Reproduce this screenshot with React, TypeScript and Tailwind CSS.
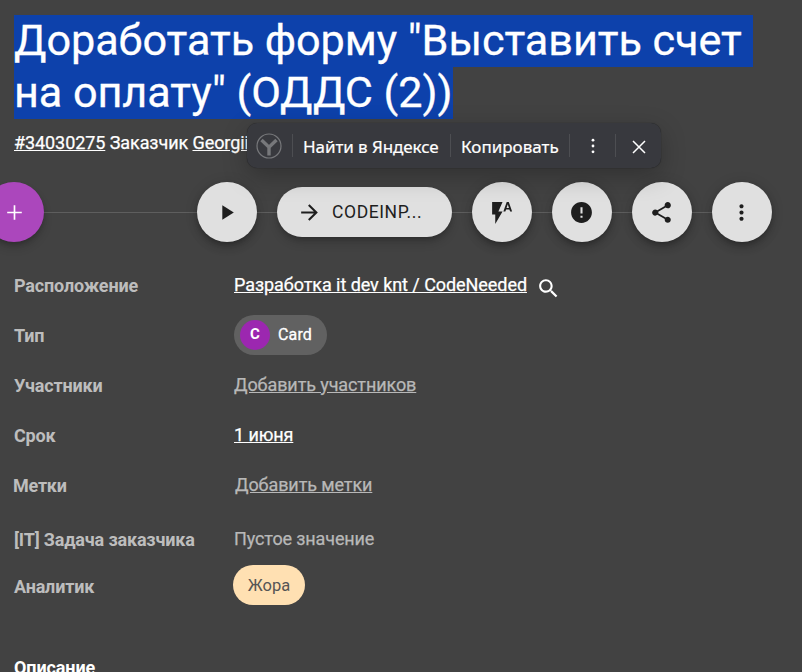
import type { ReactNode } from "react";

const roundButton =
  "relative flex h-[60px] w-[60px] shrink-0 items-center justify-center rounded-full bg-[#e0e0e0] pr-px text-[#1e1e1e] shadow-[0_3px_5px_-1px_rgba(0,0,0,0.2),0_6px_10px_rgba(0,0,0,0.14),0_1px_14px_rgba(0,0,0,0.12)]";

function Icon({ d, size = 24, className = "" }: { d: string; size?: number; className?: string }) {
  return (
    <svg viewBox="0 0 24 24" width={size} height={size} fill="currentColor" className={className}>
      <path d={d} />
    </svg>
  );
}

function RoundButton({ children }: { children: ReactNode }) {
  return <button className={roundButton}>{children}</button>;
}

function Row({ label, height = "h-[50px]", children }: { label: ReactNode; height?: string; children: ReactNode }) {
  return (
    <div className={"flex items-center " + height}>
      <div className="-mt-[2px] w-[220px] shrink-0 font-bold tracking-[-0.17px] text-[#bdbdbd]">{label}</div>
      {children}
    </div>
  );
}

function SelectionToolbar() {
  return (
    <div className="absolute left-[247px] top-[123px] flex h-[45px] w-[414px] items-center rounded-[10px] bg-[#38393e] font-['Noto_Sans',sans-serif] text-[17px] text-white shadow-[0_0_1px_rgba(0,0,0,0.6),0_8px_24px_rgba(0,0,0,0.25)]">
      <div className="flex h-[23px] w-[46px] items-center justify-center border-r border-[#4d4e52]">
        <svg width="26" height="26" viewBox="0 0 26 26" fill="none" stroke="#77787b" className="mr-px mt-px">
          <circle cx="13" cy="13" r="12" strokeWidth="1.2" />
          <path d="M5.5 7L13 14.2L20.5 7M13 13.5V22.5" strokeWidth="3.4" />
        </svg>
      </div>
      <div className="flex h-[23px] w-[158px] items-center border-r border-[#4d4e52] pl-[10px]">
        <span className="whitespace-nowrap pt-[2px] tracking-[-0.08px] [-webkit-text-stroke:0.2px]">Найти в Яндексе</span>
      </div>
      <div className="flex h-[23px] w-[119px] items-center border-r border-[#4d4e52] pl-[10px]">
        <span className="whitespace-nowrap pt-[2px] [-webkit-text-stroke:0.2px]">Копировать</span>
      </div>
      <div className="flex h-[23px] w-[46px] items-center justify-center border-r border-[#4d4e52] pt-px">
        <svg width="4" height="16" viewBox="0 0 4 16" fill="#fff">
          <circle cx="2" cy="2.2" r="1.4" />
          <circle cx="2" cy="8" r="1.4" />
          <circle cx="2" cy="13.8" r="1.4" />
        </svg>
      </div>
      <div className="flex flex-1 items-center justify-center pt-[2px]">
        <svg width="14" height="14" viewBox="0 0 14 14" stroke="#fff" strokeWidth="1.5">
          <path d="M1 1L13 13M13 1L1 13" />
        </svg>
      </div>
    </div>
  );
}

export default function App() {
  return (
    <div className="relative h-[672px] w-[802px] overflow-hidden bg-[#424242] pl-[14px] pt-[15px] font-[Roboto,sans-serif] text-[18px] text-white">
      <h1 className="text-[43.2px] leading-[52px] tracking-[-0.06px] [-webkit-text-stroke:0.3px]">
        <span className="block h-[52px] w-[739px] whitespace-nowrap bg-[#0d41ab]">Доработать форму "Выставить счет</span>
        <span className="block h-[52px] w-[439px] whitespace-nowrap bg-[#0d41ab]">на оплату" (ОДДС (2))</span>
      </h1>
      <div className="mt-3 h-6 whitespace-nowrap leading-6 tracking-[-0.08px] [-webkit-text-stroke:0.25px]">
        <a className="underline">#34030275</a> Заказчик <a className="underline">Georgii</a>
      </div>

      <div className="relative -ml-[30px] mt-[27px] flex h-[60px] w-[788px] items-center gap-5">
        <div className="absolute left-0 right-5 top-[30px] h-px bg-[#5e5e5e]" />
        <button className="relative mr-[133px] flex h-[60px] w-[60px] shrink-0 items-center justify-center rounded-full bg-[#ab47bc] pl-px shadow-[0_3px_5px_-1px_rgba(0,0,0,0.2),0_6px_10px_rgba(0,0,0,0.14)]">
          <Icon d="M19 12.8h-6.2V19h-1.6v-6.2H5v-1.6h6.2V5h1.6v6.2H19z" size={25} />
        </button>
        <RoundButton>
          <Icon d="M8 5v14l11-7z" size={25} />
        </RoundButton>
        <button className="relative flex h-[50px] w-[175px] shrink-0 items-center rounded-full bg-[#e0e0e0] pl-5 text-[#1e1e1e] shadow-[0_3px_5px_-1px_rgba(0,0,0,0.2),0_6px_10px_rgba(0,0,0,0.14)]">
          <Icon d="M12 4l-1.41 1.41L16.17 11H4v2h12.17l-5.58 5.59L12 20l8-8z" size={25} />
          <span className="ml-[10px] text-[17.5px] tracking-[0.6px]">CODEINP...</span>
        </button>
        <RoundButton>
          <Icon d="M3 2v12h3v9l7-12H9l4-9H3zm16 0h-2l-3.2 9h1.9l.7-2h3.2l.7 2h1.9L19 2zm-2.15 5.65L18 4l1.15 3.65h-2.3z" size={25} />
        </RoundButton>
        <RoundButton>
          <Icon d="M12 2C6.48 2 2 6.48 2 12s4.48 10 10 10 10-4.48 10-10S17.52 2 12 2zm1 15h-2v-2h2v2zm0-4h-2V7h2v6z" size={25} />
        </RoundButton>
        <RoundButton>
          <Icon d="M18 16.08c-.76 0-1.44.3-1.96.77L8.91 12.7c.05-.23.09-.46.09-.7s-.04-.47-.09-.7l7.05-4.11c.54.5 1.25.81 2.04.81 1.66 0 3-1.34 3-3s-1.34-3-3-3-3 1.34-3 3c0 .24.04.47.09.7L8.04 9.81C7.5 9.31 6.79 9 6 9c-1.66 0-3 1.34-3 3s1.34 3 3 3c.79 0 1.5-.31 2.04-.81l7.12 4.16c-.05.21-.08.43-.08.65 0 1.61 1.31 2.92 2.92 2.92 1.61 0 2.92-1.31 2.92-2.92s-1.31-2.92-2.92-2.92z" size={25} />
        </RoundButton>
        <RoundButton>
          <Icon d="M12 8c1.1 0 2-.9 2-2s-.9-2-2-2-2 .9-2 2 .9 2 2 2zm0 2c-1.1 0-2 .9-2 2s.9 2 2 2 2-.9 2-2-.9-2-2-2zm0 6c-1.1 0-2 .9-2 2s.9 2 2 2 2-.9 2-2-.9-2-2-2z" size={25} />
        </RoundButton>
      </div>

      <div className="mt-[19px] whitespace-nowrap">
        <Row label="Расположение">
          <a className="-mt-1 tracking-[-0.06px] underline [-webkit-text-stroke:0.25px]">Разработка it dev knt / CodeNeeded</a>
          <Icon
            d="M15.5 14h-.79l-.28-.27C15.41 12.59 16 11.11 16 9.5 16 5.91 13.09 3 9.5 3S3 5.91 3 9.5 5.91 16 9.5 16c1.61 0 3.09-.59 4.23-1.57l.27.28v.79l5 4.99L20.49 19l-4.99-5zm-6 0C7.01 14 5 11.99 5 9.5S7.01 5 9.5 5 14 7.01 14 9.5 11.99 14 9.5 14z"
            size={25}
            className="ml-[9px] mt-1"
          />
        </Row>
        <Row label="Тип">
          <div className="-mt-[2px] flex h-10 w-[93px] items-center rounded-full bg-[#616161] pl-[6px] text-[16px]">
            <span className="flex h-[30px] w-[30px] items-center justify-center rounded-full bg-[#9c27b0] pb-[2px] text-[15px] font-bold">C</span>
            <span className="ml-2 pb-px tracking-[0.15px] [-webkit-text-stroke:0.3px]">Card</span>
          </div>
        </Row>
        <Row label="Участники">
          <a className="-mt-1 tracking-[-0.1px] text-[#b8b8b8] underline [-webkit-text-stroke:0.25px]">Добавить участников</a>
        </Row>
        <Row label="Срок">
          <a className="-mt-1 tracking-[-0.1px] underline [-webkit-text-stroke:0.25px]">1 июня</a>
        </Row>
        <Row label={<span className="-ml-px tracking-[-0.25px]">Метки</span>}>
          <a className="-mt-1 ml-px tracking-[-0.1px] text-[#b8b8b8] underline [-webkit-text-stroke:0.25px]">Добавить метки</a>
        </Row>
        <Row label="[IT] Задача заказчика" height="h-[54px] pt-1">
          <span className="-mt-1 tracking-[-0.13px] text-[#b8b8b8] [-webkit-text-stroke:0.25px]">Пустое значение</span>
        </Row>
        <Row label={<span className="relative top-[2px]">Аналитик</span>} height="h-10">
          <div className="-ml-px flex h-10 w-[72px] items-center justify-center rounded-full bg-[#ffe0b2] pt-[2px] text-[16.5px] text-[#555]">Жора</div>
        </Row>
      </div>
      <h2 className="mt-[51px] font-bold leading-6 tracking-[-0.1px]">Описание</h2>

      <SelectionToolbar />
    </div>
  );
}
